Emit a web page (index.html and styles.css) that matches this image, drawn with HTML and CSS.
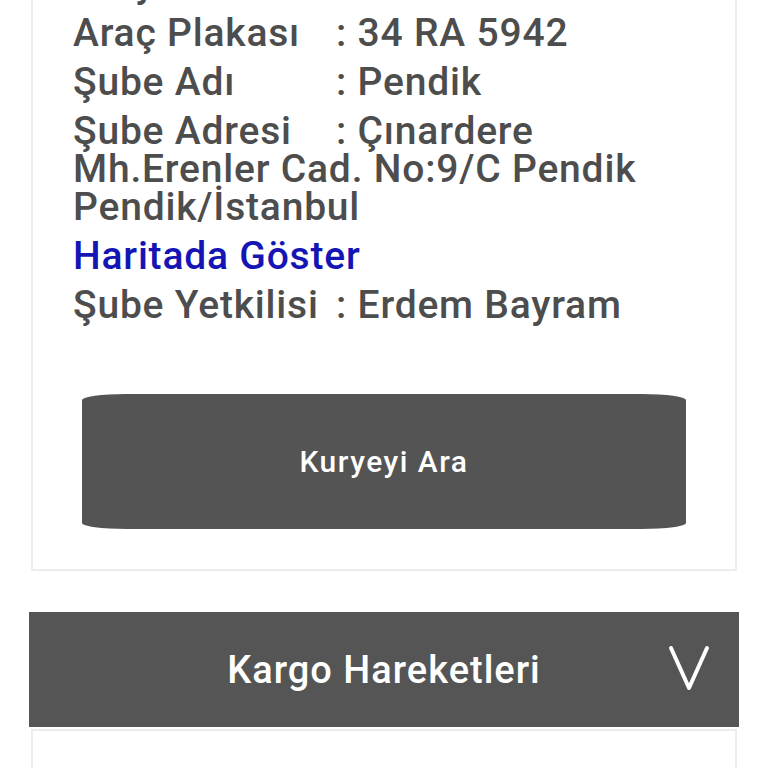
FILE: index.html
```html
<!DOCTYPE html>
<html lang="tr">
<head>
  <meta charset="UTF-8">
  <meta name="viewport" content="width=device-width, initial-scale=1.0">
  <title>Kargo Takip</title>
  <link rel="stylesheet" href="styles.css">
</head>
<body>

  <!-- Kurye / Sube bilgileri -->
  <div class="info-card">
    <div class="info-row"><span class="label">Kurye Adı</span>: Yusuf Yılmaz</div>
    <div class="info-row"><span class="label">Araç Plakası</span>: 34 RA 5942</div>
    <div class="info-row"><span class="label">Şube Adı</span>: Pendik</div>
    <div class="info-row"><span class="label">Şube Adresi</span>: Çınardere Mh.Erenler Cad. No:9/C Pendik Pendik/İstanbul</div>
    <a href="#" class="map-link">Haritada Göster</a>
    <div class="info-row"><span class="label">Şube Yetkilisi</span>: Erdem Bayram</div>

    <button class="call-button">Kuryeyi Ara</button>
  </div>

  <!-- Kargo Hareketleri -->
  <div class="section-header">
    <span></span>
    <h3>Kargo Hareketleri</h3>
    <svg class="chevron" width="42" height="46" viewBox="0 0 42 46">
      <polyline points="3,3 21,43 39,3" fill="none" stroke="#fff" stroke-width="4" stroke-linecap="round" stroke-linejoin="round"/>
    </svg>
  </div>

  <div class="movements-card"></div>

</body>
</html>
```

FILE: styles.css
```css
body {
  margin: 0;
  padding: 0 29px;
  font-family: 'Roboto', 'Liberation Sans', sans-serif;
  background: #fff;
  color: #4d4d4d;
  overflow: hidden;
}

.info-card {
  margin: -35px 2px 0;
  padding: 0 40px 40px;
  border: 2px solid #ececec;
  border-top: none;
  background: #fff;
}

.info-row {
  font-size: 39px;
  font-weight: 500;
  line-height: 38px;
  margin-bottom: 11px;
  letter-spacing: 0.8px;
}

.info-row .label {
  display: inline-block;
  width: 263px;
}

.map-link {
  display: block;
  font-size: 39px;
  font-weight: 500;
  line-height: 38px;
  margin-bottom: 11px;
  color: #1515b5;
  text-decoration: none;
  letter-spacing: 0.8px;
}

.call-button {
  display: block;
  width: calc(100% - 18px);
  height: 135px;
  margin: 70px 9px 0;
  background: #545454;
  border: none;
  border-radius: 44px / 6px;
  color: #fff;
  font-family: inherit;
  font-size: 30px;
  font-weight: 500;
  letter-spacing: 1.5px;
  cursor: pointer;
}

.section-header {
  display: grid;
  grid-template-columns: 1fr auto 1fr;
  align-items: center;
  height: 115px;
  margin-top: 41px;
  background: #555;
}

.section-header h3 {
  margin: 0;
  color: #fff;
  font-size: 38px;
  font-weight: 500;
  letter-spacing: 1px;
}

.section-header .chevron {
  justify-self: end;
  margin-right: 29px;
  margin-bottom: 3px;
}

.movements-card {
  height: 200px;
  margin: 2px 2px 0;
  border: 2px solid #ececec;
  border-bottom: none;
}
```
